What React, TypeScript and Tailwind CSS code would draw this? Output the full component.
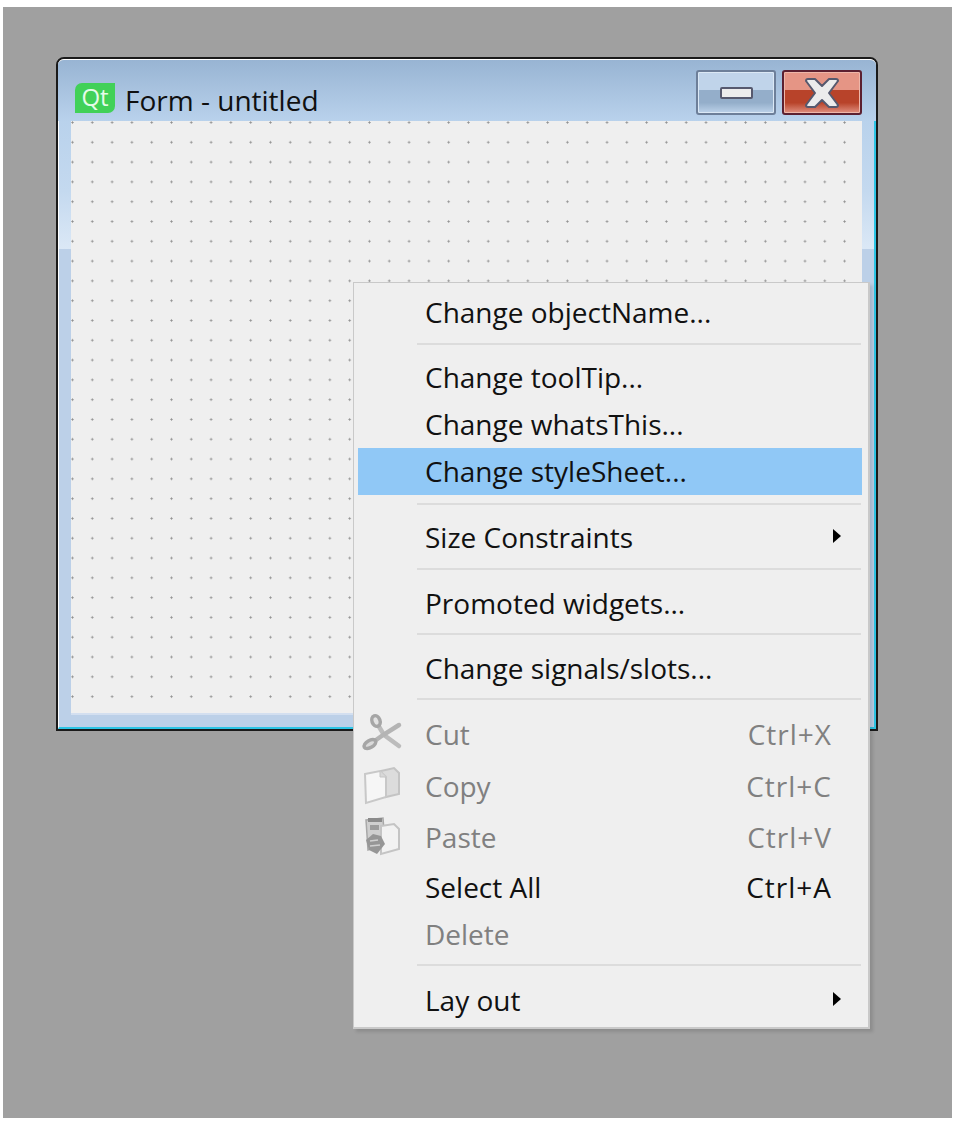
const TEXT_FONT = "font-['Open_Sans','Noto_Sans',sans-serif]";

type Row =
  | { kind: "sep"; box: string }
  | {
      kind: "item";
      label: string;
      shortcut?: string;
      disabled?: boolean;
      active?: boolean;
      submenu?: boolean;
      icon?: "cut" | "copy" | "paste";
      height?: string;
    };

// the separators in the shot don't sit on an even rhythm, so each carries its own box
const ROWS: Row[] = [
  { kind: "item", label: "Change objectName..." },
  { kind: "sep", box: "h-[18px] pt-[7px]" },
  { kind: "item", label: "Change toolTip..." },
  { kind: "item", label: "Change whatsThis..." },
  { kind: "item", label: "Change styleSheet...", active: true },
  { kind: "sep", box: "h-[19px] pt-[8px]" },
  { kind: "item", label: "Size Constraints", submenu: true },
  { kind: "sep", box: "h-[19px] pt-[7px]" },
  { kind: "item", label: "Promoted widgets..." },
  { kind: "sep", box: "h-[18px] pt-[6px]" },
  { kind: "item", label: "Change signals/slots..." },
  { kind: "sep", box: "h-[17px] pt-[6px]" },
  { kind: "item", label: "Cut", shortcut: "Ctrl+X", disabled: true, icon: "cut", height: "h-[52px]" },
  { kind: "item", label: "Copy", shortcut: "Ctrl+C", disabled: true, icon: "copy", height: "h-[51px]" },
  { kind: "item", label: "Paste", shortcut: "Ctrl+V", disabled: true, icon: "paste", height: "h-[52px]" },
  { kind: "item", label: "Select All", shortcut: "Ctrl+A" },
  { kind: "item", label: "Delete", disabled: true },
  { kind: "sep", box: "h-[19px] pt-[6px]" },
  { kind: "item", label: "Lay out", submenu: true },
];

function MenuIcon({ name }: { name: "cut" | "copy" | "paste" }) {
  if (name === "cut") {
    return (
      <svg width="42" height="42" viewBox="0 0 42 42" className="blur-[0.6px]">
        <path d="M17 12 L23 22 L38 33" fill="none" stroke="#bcbcbc" strokeWidth="4.5" strokeLinecap="round" />
        <path d="M38 12 L22 22 L15 27" fill="none" stroke="#b4b4b4" strokeWidth="4.5" strokeLinecap="round" />
        <ellipse cx="15" cy="8" rx="4" ry="5.5" fill="#e2e2e2" stroke="#a6a6a6" strokeWidth="3.5" transform="rotate(-20 15 8)" />
        <ellipse cx="9" cy="31" rx="6.5" ry="3.5" fill="#dadada" stroke="#a6a6a6" strokeWidth="3.5" transform="rotate(-30 9 31)" />
      </svg>
    );
  }
  if (name === "copy") {
    return (
      <svg width="42" height="42" viewBox="0 0 42 42" className="blur-[0.5px]">
        <path d="M20 6 L33 3 L38 8 L38 29 L25 32 Z" fill="#dcdcdc" stroke="#c4c4c4" strokeWidth="2" />
        <path d="M4 9 L19 6 L25 12 L25 32 L5 38 Z" fill="#f6f6f6" stroke="#c8c8c8" strokeWidth="2" />
        <path d="M19 6 L19 12 L25 12" fill="#d8d8d8" stroke="#c4c4c4" strokeWidth="1" />
      </svg>
    );
  }
  return (
    <svg width="42" height="42" viewBox="0 0 42 42" className="blur-[0.5px]">
      <path d="M5 4 L22 2 L24 28 L7 34 Z" fill="#cfcfcf" stroke="#a8a8a8" strokeWidth="1.5" />
      <rect x="7" y="2" width="14" height="4" fill="#8a8a8a" />
      <rect x="9" y="9" width="9" height="5" fill="#9c9c9c" />
      <path d="M20 10 L33 8 L38 13 L38 33 L20 38 Z" fill="#f2f2f2" stroke="#c4c4c4" strokeWidth="2" />
      <path d="M5 24 L12 18 L20 20 L24 28 L16 38 L8 34 Z" fill="#969696" />
      <path d="M9 25 L17 24 M9 30 L19 29" stroke="#d0d0d0" strokeWidth="1.5" />
    </svg>
  );
}

function ContextMenu() {
  return (
    <div className={`absolute left-[350px] top-[275px] w-[517px] border border-[#c9c9c9] border-b-2 border-r-2 bg-[#efefef] pt-[6px] pb-[3px] shadow-[3px_3px_3px_rgba(0,0,0,0.12)] ${TEXT_FONT}`}>
      {ROWS.map((row, i) => {
        if (row.kind === "sep") {
          return (
            <div key={i} className={`${row.box} pl-[63px] pr-[7px]`}>
              <div className="h-[2px] w-full bg-[#dcdcdc]" />
            </div>
          );
        }
        return (
          <div
            key={i}
            className={`ml-[4px] mr-[6px] flex items-center pb-[2px] text-[28px] ${row.height ?? "h-[47px]"} ${row.active ? "bg-[#90c8f6]" : ""} ${row.disabled ? "text-[#808080]" : "text-[#111]"}`}
          >
            <div className="flex w-[67px] shrink-0 items-center justify-start pl-[3px]">
              {row.icon && <MenuIcon name={row.icon} />}
            </div>
            <span className="flex-1">{row.label}</span>
            {row.shortcut && <span className="mr-[30px] tracking-[1px]">{row.shortcut}</span>}
            {row.submenu && (
              <svg width="10" height="16" viewBox="0 0 10 16" className="mb-[1px] mr-[20px]">
                <path d="M1 1 L9 8 L1 15 Z" fill="#000" />
              </svg>
            )}
          </div>
        );
      })}
    </div>
  );
}

function FormWindow() {
  return (
    <div className="flex h-[674px] w-[822px] flex-col rounded-t-[8px] border-2 border-[#1a1a1a]">
      <div className={`flex h-[62px] shrink-0 items-start rounded-t-[6px] border-t border-t-white bg-gradient-to-b from-[#98b4d3] to-[#b9d2ec] pl-[17px] pr-[14px] ${TEXT_FONT}`}>
        <div className="mt-[23px] flex h-[30px] w-[40px] items-center justify-center rounded-tl-[7px] rounded-br-[7px] bg-[#41d158] pb-[2px] text-[24px] font-medium leading-none text-[#e6fbe9]">
          Qt
        </div>
        <span className="ml-[10px] mt-[22px] text-[28px] leading-[36px] text-[#101010]">Form - untitled</span>
        <div className="ml-auto mt-[10px] flex gap-[6px]">
          <div className="flex h-[45px] w-[80px] items-center justify-center rounded-[3px] border-2 border-[#6d7f99] bg-[linear-gradient(#c0d4ea_0_45%,#94aeca_45%_75%,#bdd3ea)] shadow-[inset_0_0_0_1px_#dbe8f5]">
            <div className="h-[12px] w-[33px] rounded-[2px] border-2 border-[#56596e] bg-[#ececec]" />
          </div>
          <div className="flex h-[45px] w-[80px] items-center justify-center rounded-[3px] border-2 border-[#5c2030] bg-[linear-gradient(#e59585_0_45%,#b8432a_45%_75%,#e09080)] shadow-[inset_0_0_0_1px_#eeb7aa]">
            <svg width="36" height="32" viewBox="0 0 36 32">
              <path d="M2 4 Q2 2 4 2 L11 2 L18 9 L25 2 L32 2 Q34 2 34 4 L25 16 L34 28 Q34 30 32 30 L25 30 L18 23 L11 30 L4 30 Q2 30 2 28 L11 16 Z" fill="#ececec" stroke="#56596e" strokeWidth="2" strokeLinejoin="round" />
            </svg>
          </div>
        </div>
      </div>
      <div className="flex flex-1 border-l border-b-2 border-r-2 border-l-white border-b-[#2cc4e4] border-r-[#2cc4e4] bg-[linear-gradient(#b9d2ec_0,#c4d9ef_70px,#dbe8f6_128px,#bcd0e8_128px)] pl-[12px] pr-[12px] pb-[12px]">
        <div className="flex-1 border-b-2 border-b-[#d3dff0] bg-[#efefef] bg-[radial-gradient(circle_at_1.5px_1.5px,#8f8f8f_0,#8f8f8f_0.8px,transparent_1.4px)] bg-[length:19.8px_19.8px]" />
      </div>
    </div>
  );
}

export default function App() {
  return (
    <div className="h-[1123px] w-[955px] bg-white pl-[3px] pr-[3px] pt-[7px] pb-[5px]">
      <div className="relative h-full w-full bg-[#a0a0a0] pl-[53px] pt-[50px]">
        <FormWindow />
        <ContextMenu />
      </div>
    </div>
  );
}
